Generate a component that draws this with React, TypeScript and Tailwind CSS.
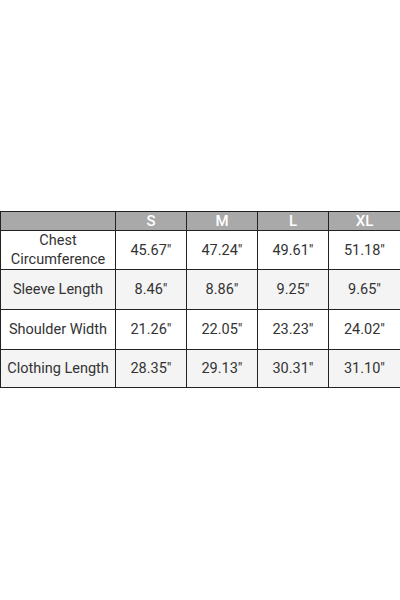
import React from 'react';

const sizes = ['S', 'M', 'L', 'XL'];

const rows: { label: React.ReactNode; values: string[]; h: string; shaded: boolean }[] = [
  { label: <>Chest<br />Circumference</>, values: ['45.67"', '47.24"', '49.61"', '51.18"'], h: 'h-[39px]', shaded: false },
  { label: 'Sleeve Length', values: ['8.46"', '8.86"', '9.25"', '9.65"'], h: 'h-[40px]', shaded: true },
  { label: 'Shoulder Width', values: ['21.26"', '22.05"', '23.23"', '24.02"'], h: 'h-[40px]', shaded: false },
  { label: 'Clothing Length', values: ['28.35"', '29.13"', '30.31"', '31.10"'], h: 'h-[38px]', shaded: true },
];

export default function App() {
  return (
    <div className="w-[400px] h-[600px] bg-white pt-[211px]" style={{ fontFamily: 'Roboto, "Liberation Sans", sans-serif' }}>
      <table className="w-[400px] border-collapse table-fixed text-[#333] text-[14.5px] leading-[19px]">
        <colgroup>
          <col className="w-[115px]" />
          <col className="w-[71px]" />
          <col className="w-[71px]" />
          <col className="w-[71px]" />
          <col className="w-[72px]" />
        </colgroup>
        <thead>
          <tr className="h-[19px] bg-[#a9a9a9]">
            <th className="border border-[#222] p-0"></th>
            {sizes.map((s) => (
              <th key={s} className="border border-[#222] p-0 text-white font-medium text-[15px] leading-[17px] text-center">
                {s}
              </th>
            ))}
          </tr>
        </thead>
        <tbody>
          {rows.map((r, i) => (
            <tr key={i} className={`${r.h} ${r.shaded ? 'bg-[#f4f4f4]' : 'bg-white'}`}>
              <td className="border border-[#222] p-0 text-center">{r.label}</td>
              {r.values.map((v, j) => (
                <td key={j} className="border border-[#222] p-0 text-center">
                  {v}
                </td>
              ))}
            </tr>
          ))}
        </tbody>
      </table>
    </div>
  );
}
